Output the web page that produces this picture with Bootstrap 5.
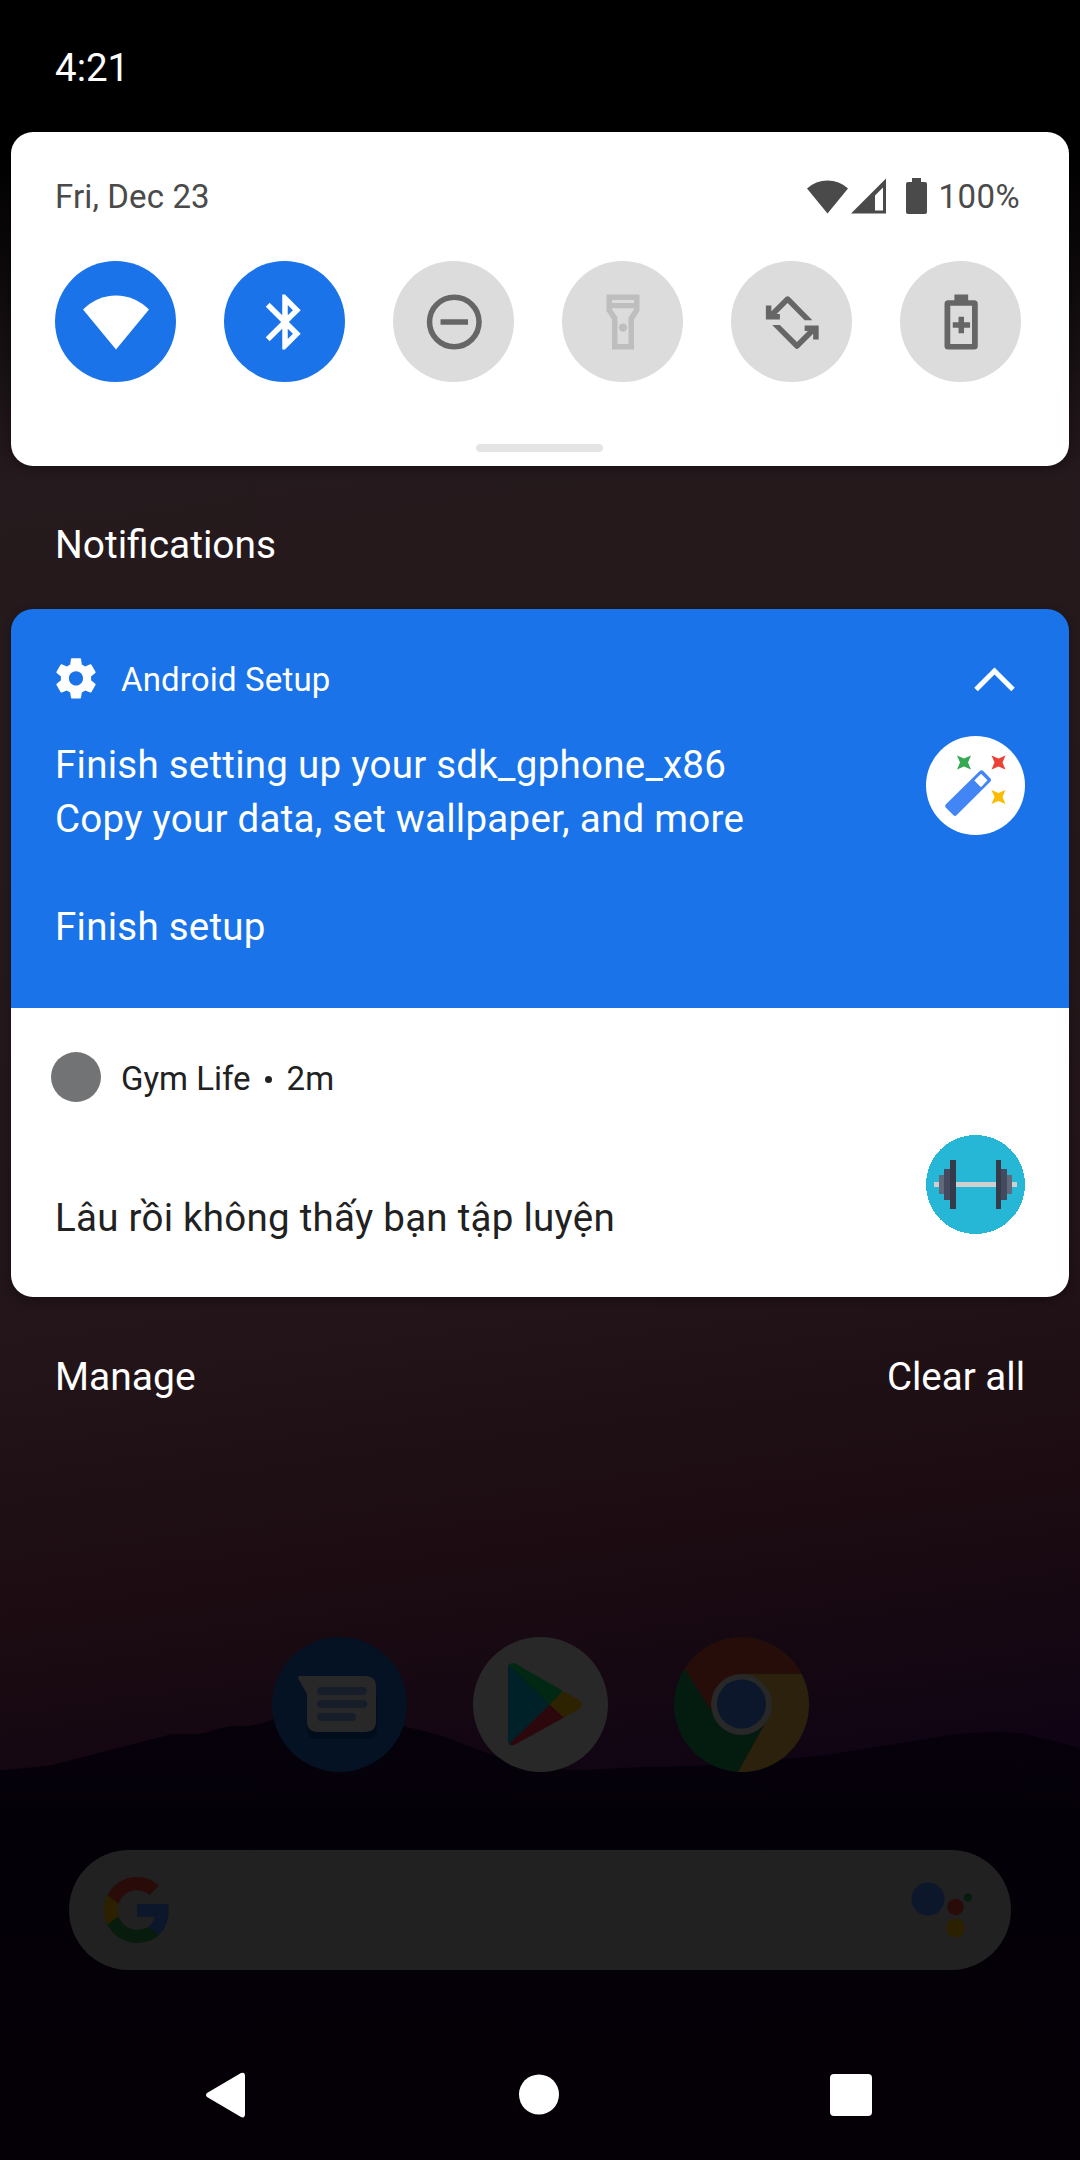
<!DOCTYPE html>
<html lang="en">
<head>
<meta charset="utf-8">
<meta name="viewport" content="width=device-width, initial-scale=1">
<title>Notifications</title>
<link href="https://cdn.jsdelivr.net/npm/bootstrap@5.3.0/dist/css/bootstrap.min.css" rel="stylesheet">
<style>
  body { margin: 0; background: #050007; font-family: Roboto, "Noto Sans", sans-serif; font-size: 38.5px; line-height: 54px; }
  svg { display: block; flex: none; }
  .phone { width: 1080px; height: 2160px; }
  .wallpaper { inset: 0; z-index: 0; }
  .layer { z-index: 1; }
  .statusbar { height: 132px; padding: 4px 55px 0; }
  .panel { margin: 0 11px; border-radius: 22px; box-shadow: 0 2px 10px rgba(0,0,0,.35); }
  .quick { height: 334px; padding: 34px 44px 0; color: #4a4a4a; }
  .quick-head { height: 62px; font-size: 33px; letter-spacing: .12px; }
  .quick-head svg { margin-bottom: 3px; }
  .signal-icon { margin-left: 3px; }
  .battery-icon { margin-left: 20px; }
  .battery-text { margin-left: 12px; margin-right: 5px; letter-spacing: .4px; }
  .tiles { margin-top: 33px; padding-right: 4px; }
  .tile { width: 121px; height: 121px; background: #dcdcdc; color: #666; }
  .tile-on { background: #1a73e8; color: #fff; }
  .tile-off { color: #bebebe; }
  .handle { width: 127px; height: 8px; border-radius: 4px; background: #e4e4e4; margin-top: 62px; margin-right: 1px; }
  .section-title { height: 143px; padding: 14px 55px 0; font-size: 38.9px; }
  .notice { padding: 39px 44px 0; letter-spacing: .26px; }
  .notice-setup { height: 399px; background: #1a73e8; color: #fff; }
  .notice-gym { height: 289px; background: #fff; color: #212121; }
  .notice-head { height: 62px; font-size: 33px; letter-spacing: .15px; }
  .notice-head span { padding-top: 2px; }
  .app-name { margin-left: 24px; }
  .app-name-dot { margin-left: 20px; letter-spacing: 0; }
  .chevron { margin-right: 10px; }
  .notice-body { margin-top: 26px; }
  .body-text { padding-top: 2px; }
  .body-low { padding-top: 56px; }
  .notice-action { margin-top: 54px; }
  .app-dot { width: 50px; height: 50px; background: #727375; margin: -3px 0 0 -4px; }
  .sep-dot { width: 7px; height: 7px; background: #212121; margin: 2px 15px 0 14px; }
  .actions { height: 160px; padding: 0 55px; }
  .act-manage { font-size: 39px; }
  .dock { margin-top: 180px; gap: 66px; }
  .searchbar { width: 942px; height: 120px; margin-top: 78px; background: #212121; padding: 0 38px 0 32px; }
  .navbar-keys { height: 131px; margin-top: 59px; padding: 0 208px 0 205px; }
  .key-home { margin-left: 3px; }
</style>
</head>
<body>
<div class="phone position-relative overflow-hidden">

  <svg class="wallpaper position-absolute" width="1080" height="2160" viewBox="0 0 1080 2160">
    <defs>
      <linearGradient id="sky" gradientUnits="userSpaceOnUse" x1="540" y1="0" x2="780" y2="1770">
        <stop offset=".1" stop-color="#251a1d"/>
        <stop offset=".45" stop-color="#25191c"/>
        <stop offset=".72" stop-color="#221418"/>
        <stop offset=".86" stop-color="#1c0c12"/>
        <stop offset=".93" stop-color="#160812"/>
        <stop offset="1" stop-color="#100414"/>
      </linearGradient>
      <linearGradient id="topshade" x1="0" y1="0" x2="0" y2="1">
        <stop offset=".3" stop-color="#000"/>
        <stop offset=".6" stop-color="#000" stop-opacity=".6"/>
        <stop offset="1" stop-color="#000" stop-opacity="0"/>
      </linearGradient>
      <linearGradient id="land" x1="0" y1="0" x2="0" y2="1">
        <stop offset="0" stop-color="#06010b"/>
        <stop offset=".35" stop-color="#040007"/>
        <stop offset="1" stop-color="#050006"/>
      </linearGradient>
    </defs>
    <rect width="1080" height="1800" fill="url(#sky)"/>
    <rect width="1080" height="480" fill="url(#topshade)"/>
    <path fill="url(#land)" d="M0 1770Q30 1768 52 1765Q110 1750 172 1734Q190 1735 205 1733Q220 1727 234 1726Q248 1727 258 1724Q268 1722 285 1714Q340 1702 407 1727Q430 1732 448 1738L503 1759Q540 1770 585 1770L640 1767Q690 1767 737 1763Q780 1760 826 1755Q890 1745 950 1735Q985 1730 1019 1733Q1040 1737 1080 1748V2160H0Z"/>
  </svg>

  <div class="layer position-relative d-flex flex-column">
    <div class="statusbar d-flex align-items-center text-white">4:21</div>

    <section class="panel quick bg-white d-flex flex-column">
      <div class="quick-head d-flex align-items-center justify-content-between">
        <span>Fri, Dec 23</span>
        <div class="d-flex align-items-center">
          <svg width="41" height="36" viewBox="0 0 41 36" fill="currentColor"><path d="M20.5 35.5L0 10.500A30 30 0 0 1 41 10.500Z"/></svg>
          <svg class="signal-icon" width="35" height="36" viewBox="0 0 35 36" fill="currentColor"><path fill-rule="evenodd" d="M35 .5V35.500H0ZM32 9.500L24 17.500V32.500H32Z"/></svg>
          <svg class="battery-icon" width="21" height="36" viewBox="0 0 21 36" fill="currentColor"><path d="M6 0h9v4h4q2 0 2 2v28q0 2-2 2H2q-2 0-2-2V6q0-2 2-2h4z"/></svg>
          <span class="battery-text">100%</span>
        </div>
      </div>
      <div class="tiles d-flex justify-content-between">
        <div class="tile tile-on rounded-circle d-flex align-items-center justify-content-center">
          <svg width="66" height="66" viewBox="0 0 66 66" fill="currentColor"><path d="M33 60.500L0 20.500A46 46 0 0 1 66 20.500Z"/></svg>
        </div>
        <div class="tile tile-on rounded-circle d-flex align-items-center justify-content-center">
          <svg width="66" height="66" viewBox="0 0 24 24" fill="currentColor"><path d="M17.710 7.710L12 2h-1v7.590L6.410 5 5 6.410 10.590 12 5 17.590 6.410 19 11 14.410V22h1l5.710-5.710-4.300-4.290 4.300-4.290zM13 5.830l1.880 1.880L13 9.590V5.830zm1.880 10.460L13 18.170v-3.760l1.880 1.880z"/></svg>
        </div>
        <div class="tile rounded-circle d-flex align-items-center justify-content-center">
          <svg width="66" height="66" viewBox="0 0 24 24" fill="none" stroke="currentColor" stroke-width="2"><circle cx="12.100" cy="12" r="9"/><path d="M7.100 12h10"/></svg>
        </div>
        <div class="tile tile-off rounded-circle d-flex align-items-center justify-content-center">
          <svg width="66" height="66" viewBox="0 0 24 24" fill="currentColor"><path fill-rule="evenodd" d="M6 2h12v6l-2 3v11H8V11L6 8zM8 4v1.100h8V4zM8 7v.4l2 3V20h4v-9.600l2-3V7z"/><circle cx="12" cy="14" r="1.500"/></svg>
        </div>
        <div class="tile rounded-circle d-flex align-items-center justify-content-center">
          <svg width="66" height="66" viewBox="0 0 24 24" fill="currentColor"><g id="turn"><path d="M9.700 2.950Q10.400 2.300 11.100 2.950L19.400 11.350H16.600L10.400 5.100L6.400 9.100H7.600V11.100H2.500V6H4.500V8.100Z"/></g><use href="#turn" transform="rotate(180 12.100 12.200)"/></svg>
        </div>
        <div class="tile rounded-circle d-flex align-items-center justify-content-center">
          <svg width="66" height="66" viewBox="0 0 24 24" fill="currentColor"><path fill-rule="evenodd" d="M9.600 2h5v2.100h2.200q1.300 0 1.300 1.300v15.300q0 1.300-1.300 1.300H7.300q-1.300 0-1.300-1.300V5.400q0-1.300 1.300-1.300h2.300zM8.100 6.100V20h7.900V6.100zM11.100 10.100h2v2h2.200v2h-2.200v2h-2v-2H9v-2h2.100z"/></svg>
        </div>
      </div>
      <div class="handle align-self-center"></div>
    </section>

    <div class="section-title d-flex align-items-center text-white">Notifications</div>

    <section class="panel overflow-hidden">
      <article class="notice notice-setup">
        <div class="notice-head d-flex align-items-center">
          <svg width="42" height="42" viewBox="1.600 2.300 20.800 20" overflow="visible" fill="#fff"><path d="M19.430 12.980c.04-.32.07-.64.07-.98s-.03-.66-.07-.98l2.110-1.650c.19-.15.24-.42.12-.64l-2-3.460c-.12-.22-.39-.3-.61-.22l-2.490 1c-.52-.4-1.080-.73-1.690-.98l-.38-2.650C14.460 2.180 14.250 2 14 2h-4c-.25 0-.46.18-.49.420l-.38 2.650c-.61.25-1.170.59-1.690.98l-2.490-1c-.23-.09-.49 0-.61.22l-2 3.460c-.13.22-.07.49.12.64l2.110 1.650c-.04.32-.07.65-.07.98s.03.66.07.98l-2.110 1.650c-.19.15-.24.42-.12.64l2 3.460c.12.22.39.3.61.22l2.490-1c.52.4 1.080.73 1.690.98l.38 2.650c.03.24.24.42.49.420h4c.25 0 .46-.18.49-.42l.38-2.650c.61-.25 1.170-.59 1.690-.98l2.490 1c.23.09.49 0 .61-.22l2-3.460c.12-.22.07-.49-.12-.64l-2.110-1.650zM12 15.500c-1.930 0-3.500-1.570-3.500-3.500s1.570-3.500 3.500-3.500 3.500 1.570 3.500 3.500-1.570 3.500-3.500 3.500z"/></svg>
          <span class="app-name">Android Setup</span>
          <svg class="chevron ms-auto" width="41" height="25" viewBox="0 0 41 25" fill="none" stroke="#fff" stroke-width="5"><path d="M2 22.500L20.500 4L39 22.500"/></svg>
        </div>
        <div class="notice-body d-flex justify-content-between">
          <div class="body-text">Finish setting up your sdk_gphone_x86<br>Copy your data, set wallpaper, and more</div>
          <svg width="99" height="99" viewBox="0 0 99 99">
            <circle cx="49.500" cy="49.500" r="49.500" fill="#fff"/>
            <path fill="#34a853" d="M31 19.500L38 22.500L45 19.500L42 26.500L45 33.500L38 30.500L31 33.500L34 26.500Z"/>
            <path fill="#ea4335" d="M65.500 19.500L72.500 22.500L79.500 19.500L76.500 26.500L79.500 33.500L72.500 30.500L65.500 33.500L68.500 26.500Z"/>
            <path fill="#fbbc04" d="M65.500 54L72.500 57L79.500 54L76.500 61L79.500 68L72.500 65L65.500 68L68.500 61Z"/>
            <path fill="#4285f4" fill-rule="evenodd" d="M54 34.800Q55.500 33.500 57 34.800L64.500 42.500Q65.800 44 64.500 45.500L30.500 79.300Q29 80.500 27.500 79.300L19.700 71.500Q18.500 70 19.700 68.500ZM55 37.800L48.300 44.500L55 51.200L61.500 44.300Z"/>
          </svg>
        </div>
        <div class="notice-action">Finish setup</div>
      </article>
      <article class="notice notice-gym">
        <div class="notice-head d-flex align-items-center">
          <div class="app-dot rounded-circle"></div>
          <span class="app-name-dot">Gym Life</span><i class="sep-dot rounded-circle"></i><span>2m</span>
        </div>
        <div class="notice-body d-flex justify-content-between">
          <div class="body-low">Lâu rồi không thấy bạn tập luyện</div>
          <svg width="99" height="99" viewBox="0 0 99 99" shape-rendering="crispEdges">
            <circle cx="49.500" cy="49.500" r="49.500" fill="#26b7d6"/>
            <path fill="#cfcfcf" d="M8 47h83v5H8z"/>
            <path fill="#616879" d="M13 40h5v19h-5zM81 40h5v19h-5z"/>
            <path fill="#434a60" d="M18 34h6v31h-6zM75 34h6v31h-6z"/>
            <path fill="#353b4b" d="M24 25h6v49h-6zM70 25h5v49h-5z"/>
          </svg>
        </div>
      </article>
    </section>

    <div class="actions d-flex align-items-center justify-content-between text-white"><span class="act-manage">Manage</span><span>Clear all</span></div>

    <div class="dock d-flex justify-content-center">
      <svg width="135" height="135" viewBox="0 0 135 135">
        <circle cx="67.500" cy="67.500" r="67.500" fill="#041224"/>
        <path fill="#020a15" opacity=".6" d="M35 60h70v32q0 10-10 10H45q-10 0-10-10z"/>
        <path fill="#282828" d="M27 39H93Q104 39 104 50V84Q104 95 93 95H46Q35 95 35 84V57L26.500 42Q25.500 39 27 39Z"/>
        <path stroke="#171e2a" stroke-width="8" stroke-linecap="round" d="M49 54H91M49 67H91M49 80H80"/>
      </svg>
      <svg width="135" height="135" viewBox="0 0 135 135">
        <circle cx="67.500" cy="67.500" r="67.500" fill="#282828"/>
        <path fill="#002127" d="M35 30Q35 27 38 27L77 67.500L38 108Q35 107 35 104Z"/>
        <path fill="#002813" d="M36 28Q39 24.500 43 27L90 54L77 67.500Z"/>
        <path fill="#2c080c" d="M36 107Q39 109.500 43 107L91 80.500L77 67.500Z"/>
        <path fill="#2e2300" d="M90 54L106 63Q112 67.500 106 72L91 80.500L77 67.500Z"/>
      </svg>
      <svg width="135" height="135" viewBox="0 0 135 135">
        <circle cx="67.500" cy="67.500" r="67.500" fill="#041b0f"/>
        <path fill="#2b210c" d="M67.500 36.500H127.500A67.500 67.500 0 0 1 64 135L93 83Z"/>
        <path fill="#270d09" d="M10.500 31.500A67.500 67.500 0 0 1 127.500 36.500H67.500L38 75Z"/>
        <circle cx="67.500" cy="67.500" r="30.500" fill="#282828"/>
        <circle cx="67.500" cy="67" r="24.500" fill="#0c172c"/>
      </svg>
    </div>

    <div class="searchbar align-self-center rounded-pill d-flex align-items-center justify-content-between">
      <svg width="72" height="72" viewBox="0 0 24 24">
        <path fill="#0c172b" d="M22.560 12.250c0-.78-.07-1.530-.2-2.250H12v4.260h5.920c-.26 1.370-1.040 2.530-2.210 3.310v2.770h3.570c2.080-1.920 3.280-4.740 3.280-8.090z"/>
        <path fill="#071c0d" d="M12 23c2.970 0 5.460-.98 7.280-2.660l-3.570-2.770c-.98.66-2.230 1.060-3.710 1.060-2.860 0-5.290-1.930-6.160-4.530H2.180v2.840C3.990 20.530 7.700 23 12 23z"/>
        <path fill="#2b2100" d="M5.840 14.090c-.22-.66-.35-1.360-.35-2.090s.13-1.430.35-2.090V7.070H2.180C1.430 8.550 1 10.220 1 12s.43 3.450 1.180 4.930l3.660-2.840z"/>
        <path fill="#290c0a" d="M12 5.380c1.620 0 3.060.56 4.210 1.640l3.150-3.150C17.450 2.090 14.970 1 12 1 7.700 1 3.990 3.470 2.180 7.070l3.660 2.840c.87-2.600 3.300-4.530 6.160-4.530z"/>
      </svg>
      <svg width="62" height="60" viewBox="911 1880 62 60">
        <circle cx="928" cy="1899" r="16.500" fill="#0c172b"/>
        <circle cx="955.500" cy="1907" r="8.200" fill="#290c0a"/>
        <circle cx="968" cy="1897.500" r="4" fill="#071c0d"/>
        <circle cx="955.500" cy="1928" r="9.600" fill="#2b2100"/>
      </svg>
    </div>

    <nav class="navbar-keys d-flex align-items-center justify-content-between">
      <svg width="40" height="46" viewBox="0 0 40 46" fill="#fff"><path d="M36 1Q40-.5 40 4V42Q40 46.500 36 45L2 25Q0 23 2 21Z"/></svg>
      <svg class="key-home" width="42" height="42" viewBox="0 0 42 42" fill="#fff"><circle cx="21" cy="20.500" r="20"/></svg>
      <svg width="42" height="42" viewBox="0 0 42 42" fill="#fff"><rect width="42" height="42" rx="4"/></svg>
    </nav>
  </div>
</div>
<script src="https://cdn.jsdelivr.net/npm/bootstrap@5.3.0/dist/js/bootstrap.bundle.min.js"></script>
</body>
</html>
